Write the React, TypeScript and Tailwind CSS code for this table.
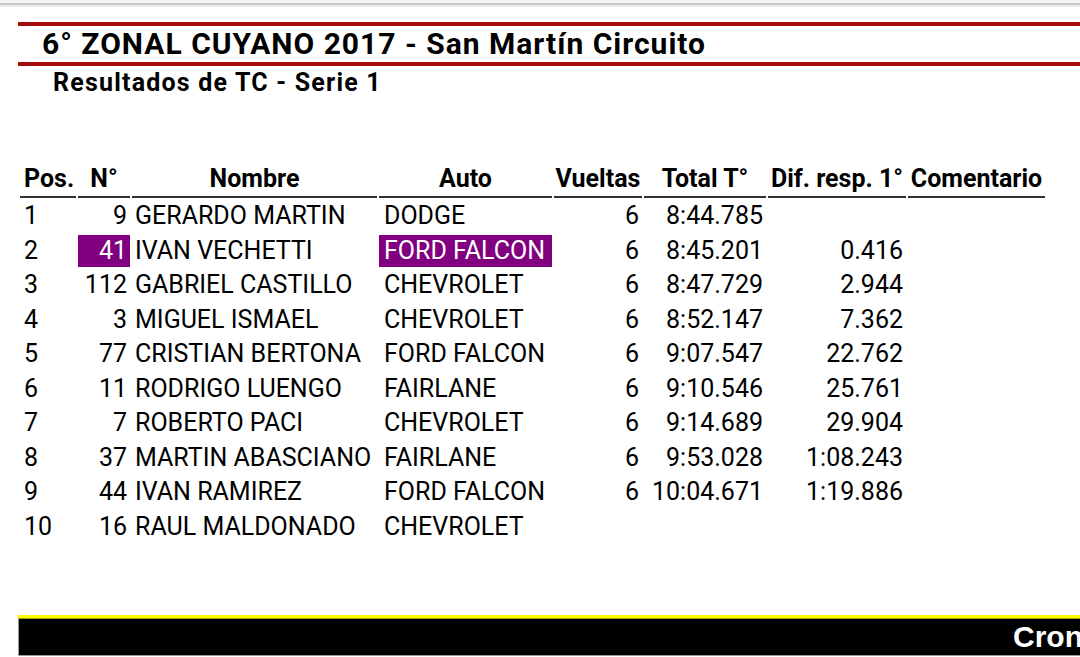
type Row = {
  pos: string;
  num: string;
  name: string;
  car: string;
  laps: string;
  total: string;
  diff: string;
  hl?: boolean;
};

const rows: Row[] = [
  { pos: "1", num: "9", name: "GERARDO MARTIN", car: "DODGE", laps: "6", total: "8:44.785", diff: "" },
  { pos: "2", num: "41", name: "IVAN VECHETTI", car: "FORD FALCON", laps: "6", total: "8:45.201", diff: "0.416", hl: true },
  { pos: "3", num: "112", name: "GABRIEL CASTILLO", car: "CHEVROLET", laps: "6", total: "8:47.729", diff: "2.944" },
  { pos: "4", num: "3", name: "MIGUEL ISMAEL", car: "CHEVROLET", laps: "6", total: "8:52.147", diff: "7.362" },
  { pos: "5", num: "77", name: "CRISTIAN BERTONA", car: "FORD FALCON", laps: "6", total: "9:07.547", diff: "22.762" },
  { pos: "6", num: "11", name: "RODRIGO LUENGO", car: "FAIRLANE", laps: "6", total: "9:10.546", diff: "25.761" },
  { pos: "7", num: "7", name: "ROBERTO PACI", car: "CHEVROLET", laps: "6", total: "9:14.689", diff: "29.904" },
  { pos: "8", num: "37", name: "MARTIN ABASCIANO", car: "FAIRLANE", laps: "6", total: "9:53.028", diff: "1:08.243" },
  { pos: "9", num: "44", name: "IVAN RAMIREZ", car: "FORD FALCON", laps: "6", total: "10:04.671", diff: "1:19.886" },
  { pos: "10", num: "16", name: "RAUL MALDONADO", car: "CHEVROLET", laps: "", total: "", diff: "" },
];

const th = "border-b-2 border-[#333] px-0 pb-[2px] leading-[30px] font-bold text-center whitespace-nowrap";
const td = "px-[3px] py-px leading-[30.5px] whitespace-nowrap";

export default function App() {
  return (
    <div className="w-[1080px] h-[657px] overflow-hidden bg-white text-black font-['Roboto',sans-serif] flex flex-col">
      {/* browser chrome shadow */}
      <div className="h-[3px] bg-[#f4f4f4]" />
      <div className="h-[2px] bg-[#c9c9c9]" />
      <div className="h-[2px] bg-[#ececec]" />

      <div className="ml-[18px] flex flex-col flex-1">
        <div className="h-[15px]" />
        <div className="h-[4px] bg-[#a80c0c]" />
        <h1 className="h-[36px] pl-[24px] text-[30px] font-bold leading-[36px] tracking-[1px] whitespace-nowrap">
          6° ZONAL CUYANO 2017 - San Martín Circuito
        </h1>
        <div className="h-[4px] bg-[#a80c0c]" />
        <h2 className="pl-[35px] pt-[3px] text-[25px] font-bold leading-[28px] tracking-[1.2px] whitespace-nowrap">
          Resultados de TC - Serie 1
        </h2>

        <table className="mt-[65px] table-fixed border-separate border-spacing-[2px] text-[25px] w-[1029px]">
          <colgroup>
            <col className="w-[56px]" />
            <col className="w-[52px]" />
            <col className="w-[245px]" />
            <col className="w-[173px]" />
            <col className="w-[88px]" />
            <col className="w-[122px]" />
            <col className="w-[138px]" />
            <col className="w-[137px]" />
          </colgroup>
          <thead>
            <tr>
              <th className={th + " !text-left !px-[4px]"}>Pos.</th>
              <th className={th}>N°</th>
              <th className={th}>Nombre</th>
              <th className={th}>Auto</th>
              <th className={th}>Vueltas</th>
              <th className={th}>Total T°</th>
              <th className={th}>Dif. resp. 1°</th>
              <th className={th}>Comentario</th>
            </tr>
          </thead>
          <tbody>
            {rows.map((r) => (
              <tr key={r.pos}>
                <td className={td + " !pl-[4px]"}>{r.pos}</td>
                <td className={td + " text-right" + (r.hl ? " bg-[#800080] text-white" : "")}>{r.num}</td>
                <td className={td}>{r.name}</td>
                <td className={td + " !pl-[5px]" + (r.hl ? " bg-[#800080] text-white" : "")}>{r.car}</td>
                <td className={td + " text-right"}>{r.laps}</td>
                <td className={td + " text-right"}>{r.total}</td>
                <td className={td + " text-right"}>{r.diff}</td>
                <td className={td}></td>
              </tr>
            ))}
          </tbody>
        </table>

        <div className="flex-1" />
        <div className="h-[4px] bg-[#ffff00] border-b border-[#a0a000]" />
        <div className="h-[37px] bg-black border-l border-b border-[#9a9a9a] flex items-center overflow-hidden">
          <span className="pl-[994px] text-white font-bold text-[30px] leading-[34px] font-['Liberation_Sans',sans-serif] whitespace-nowrap">
            Cron
          </span>
        </div>
        <div className="h-px" />
      </div>
    </div>
  );
}
